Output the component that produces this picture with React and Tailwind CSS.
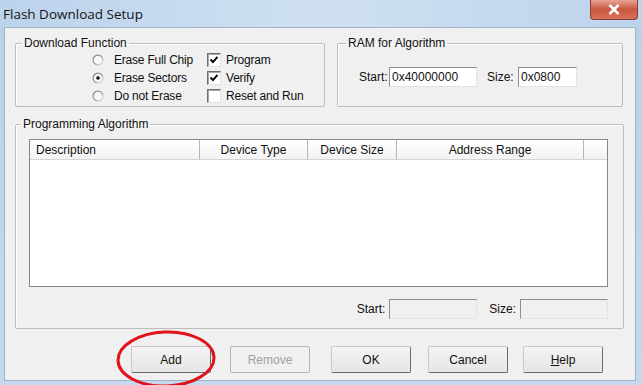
import React from "react";

const font = { fontFamily: '"Liberation Sans", Arial, sans-serif' };

function Radio({ checked }) {
  return (
    <svg width="12" height="12" viewBox="0 0 12 12" className="shrink-0">
      <defs>
        <linearGradient id="rg" x1="0" y1="0" x2="1" y2="1">
          <stop offset="0" stopColor="#7a7a7a" />
          <stop offset="0.5" stopColor="#9a9a9a" />
          <stop offset="1" stopColor="#f5f5f5" />
        </linearGradient>
      </defs>
      <circle cx="6" cy="6" r="5.5" fill="url(#rg)" />
      <circle cx="6" cy="6" r="4.3" fill="#f7f7f7" />
      {checked && <circle cx="6" cy="6" r="1.8" fill="#111" />}
    </svg>
  );
}

function Check({ checked }) {
  return (
    <div className="w-[14px] h-[14px] shrink-0 bg-white border border-t-[#6e6e6e] border-l-[#6e6e6e] border-r-[#e2e2e2] border-b-[#e2e2e2] shadow-[inset_1px_1px_0_#a8a8a8] flex items-center justify-center">
      {checked && (
        <svg width="10" height="10" viewBox="0 0 10 10">
          <path d="M1.5 4.5 L4 7 L8.5 1.8" stroke="#000" strokeWidth="1.9" fill="none" />
        </svg>
      )}
    </div>
  );
}

function Field({ w, value, disabled }) {
  return (
    <div
      className={`${w} h-[20px] border border-t-[#8e8e8e] border-l-[#8e8e8e] border-r-[#e3e3e3] border-b-[#e3e3e3] flex items-center pl-[2px] text-[12px] text-[#111] ${
        disabled ? "bg-[#f0f0f0]" : "bg-white"
      }`}
    >
      {value}
    </div>
  );
}

function Button({ label, disabled, ml, children }) {
  return (
    <div
      className={`${ml} w-[80px] h-[27px] flex items-center justify-center text-[12px] rounded-[2px] border ${
        disabled
          ? "border-[#b5b5b5] text-[#a0a0a0] bg-[#f0f0f0]"
          : "border-t-[#c8c8c8] border-l-[#c8c8c8] border-r-[#6a6a6a] border-b-[#6a6a6a] text-[#111] bg-gradient-to-b from-[#f4f4f4] to-[#e6e6e6]"
      }`}
    >
      {children || label}
    </div>
  );
}

export default function App() {
  return (
    <div
      style={font}
      className="relative w-[642px] h-[385px] overflow-hidden flex flex-col bg-gradient-to-b from-[#b8d0ea] to-[#c6d9ee] text-[#111]"
    >
      {/* Title bar */}
      <div className="h-[27px] flex items-start justify-between bg-gradient-to-r from-[#bcd3ec] via-[#cfe0f2] to-[#bdd4ec]">
        <div className="pl-[3px] pt-[4px] text-[13.5px] text-[#141414]" style={{ fontFamily: '"Open Sans", "Noto Sans", sans-serif' }}>
          Flash Download Setup
        </div>
        <div className="mr-[4px] w-[48px] h-[20px] rounded-b-[4px] border border-[#8a3a3a] border-t-0 bg-gradient-to-b from-[#e8a293] via-[#c9563f] to-[#d8735c] flex items-center justify-center">
          <svg width="12" height="11" viewBox="0 0 12 11">
            <path d="M1.5 1 L10.5 10 M10.5 1 L1.5 10" stroke="#fff" strokeWidth="2.6" />
          </svg>
        </div>
      </div>

      {/* Client */}
      <div className="flex-1 ml-[4px] mr-[6px] mb-[4px] bg-[#f0f0f0] border border-[#9eb4cc] flex flex-col text-[12px]">
        {/* top row */}
        <div className="flex mt-[8px]">
          <fieldset className="ml-[10px] w-[310px] h-[71px] border border-[#bdbdbd] shadow-[inset_1px_1px_0_#fff] rounded-[2px]">
            <legend className="ml-[6px] px-[2px] leading-[14px]">Download Function</legend>
            <div className="flex pl-[76px] pt-[1px]">
              <div className="flex flex-col w-[115px]">
                {[
                  ["Erase Full Chip", false],
                  ["Erase Sectors", true],
                  ["Do not Erase", false],
                ].map(([t, c]) => (
                  <div key={t} className="h-[18px] flex items-center gap-[10px]">
                    <Radio checked={c} />
                    <span className="tracking-[-0.2px]">{t}</span>
                  </div>
                ))}
              </div>
              <div className="flex flex-col">
                {[
                  ["Program", true],
                  ["Verify", true],
                  ["Reset and Run", false],
                ].map(([t, c]) => (
                  <div key={t} className="h-[18px] flex items-center gap-[5px]">
                    <Check checked={c} />
                    <span className="tracking-[-0.2px]">{t}</span>
                  </div>
                ))}
              </div>
            </div>
          </fieldset>

          <fieldset className="ml-[12px] w-[286px] h-[71px] border border-[#bdbdbd] shadow-[inset_1px_1px_0_#fff] rounded-[2px]">
            <legend className="ml-[8px] px-[2px] leading-[14px]">RAM for Algorithm</legend>
            <div className="flex items-center pl-[21px] pt-[17px]">
              <span className="w-[30px]">Start:</span>
              <Field w="w-[88px]" value="0x40000000" />
              <span className="ml-[10px] w-[31px]">Size:</span>
              <Field w="w-[59px]" value="0x0800" />
            </div>
          </fieldset>
        </div>

        {/* Programming Algorithm */}
        <fieldset className="mt-[10px] ml-[10px] w-[609px] h-[212px] border border-[#bdbdbd] shadow-[inset_1px_1px_0_#fff] rounded-[2px]">
          <legend className="ml-[5px] px-[2px] leading-[14px]">Programming Algorithm</legend>
          <div className="ml-[13px] mt-[8px] w-[579px] h-[148px] bg-white border border-[#828790] flex flex-col">
            <div className="h-[20px] flex border-b border-[#d5d5d5] bg-gradient-to-b from-[#ffffff] to-[#f3f3f3]">
              <div className="w-[170px] pl-[6px] flex items-center border-r border-[#b6b6b6]">Description</div>
              <div className="w-[108px] flex items-center justify-center border-r border-[#b6b6b6]">Device Type</div>
              <div className="w-[89px] flex items-center justify-center border-r border-[#b6b6b6]">Device Size</div>
              <div className="w-[187px] flex items-center justify-center border-r border-[#b6b6b6]">Address Range</div>
              <div className="flex-1" />
            </div>
          </div>
          <div className="ml-[13px] w-[579px] mt-[12px] flex items-center justify-end">
            <span className="mr-[4px]">Start:</span>
            <Field w="w-[88px]" value="" disabled />
            <span className="ml-[12px] mr-[4px]">Size:</span>
            <Field w="w-[88px]" value="" disabled />
          </div>
        </fieldset>

        {/* Buttons */}
        <div className="flex mt-[17px] pl-[126px]">
          <Button label="Add" />
          <Button label="Remove" disabled ml="ml-[19px]" />
          <Button label="OK" ml="ml-[21px]" />
          <Button label="Cancel" ml="ml-[17px]" />
          <Button ml="ml-[15px]">
            <span><span className="underline">H</span>elp</span>
          </Button>
        </div>
      </div>

      {/* Red annotation ellipse */}
      <svg className="absolute left-[114px] top-[329px]" width="104" height="64" viewBox="0 0 104 64">
        <ellipse cx="52" cy="30" rx="48" ry="27" fill="none" stroke="#e0141c" strokeWidth="3" transform="rotate(-2 52 30)" />
      </svg>
    </div>
  );
}
